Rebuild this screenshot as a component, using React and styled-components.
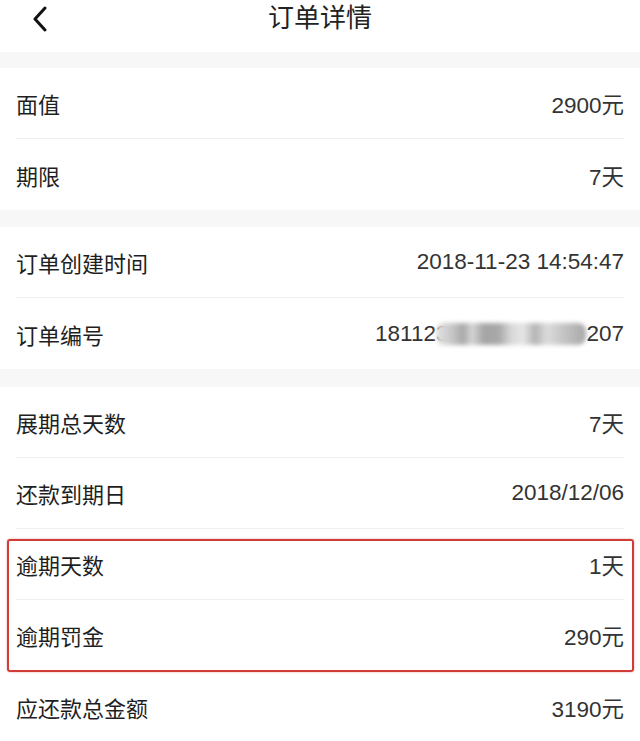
import React from 'react';
import styled, { createGlobalStyle } from 'styled-components';

const GlobalStyle = createGlobalStyle`
  html, body {
    margin: 0;
    padding: 0;
    background: #fff;
  }
  body {
    font-family: "Liberation Sans", "Noto Sans CJK SC", sans-serif;
    color: #2b2b2b;
  }
`;

const Page = styled.div`
  width: 640px;
  display: flex;
  flex-direction: column;
  background: #f7f7f7;
`;

const Header = styled.div`
  height: 52px;
  background: #fff;
  display: grid;
  grid-template-columns: 80px 1fr 80px;
  align-items: start;
`;

const BackButton = styled.div`
  padding: 6px 0 0 32px;
  display: flex;
`;

const Title = styled.h1`
  margin: 0;
  padding-top: 2px;
  text-align: center;
  font-size: 26px;
  line-height: 32px;
  font-weight: 400;
  color: #222;
`;

const Section = styled.div`
  background: #fff;
  margin-top: ${({ $gap }) => $gap}px;
  display: flex;
  flex-direction: column;
`;

const Row = styled.div`
  height: 71px;
  margin: 0 16px;
  display: flex;
  align-items: center;
  justify-content: space-between;
  border-bottom: ${({ $last }) => ($last ? 'none' : '1px solid #efefef')};
  box-sizing: border-box;
  font-size: 22px;
`;

const Label = styled.span`
  color: #1f1f1f;
`;

const Value = styled.span`
  color: #333;
  font-size: 22.5px;
  display: flex;
  align-items: center;
  white-space: nowrap;
`;

const Blurred = styled.span`
  display: inline-block;
  width: 150px;
  height: 22px;
  margin: 0 0 0 -12px;
  background: linear-gradient(
    90deg,
    #e2e2e2 0%,
    #c9c9c9 10%,
    #a9a9a9 18%,
    #d6d6d6 24%,
    #a4a4a4 32%,
    #a9a9a9 42%,
    #d8d8d8 50%,
    #e6e6e6 58%,
    #b4b4b4 66%,
    #dcdcdc 74%,
    #c6c6c6 84%,
    #a8a8a8 100%
  );
  filter: blur(2px);
  border-radius: 8px;
`;

const Highlight = styled.div`
  position: relative;
`;

const RedFrame = styled.div`
  position: absolute;
  left: 7px;
  right: 6px;
  top: 10px;
  bottom: -1px;
  border: 2px solid #d03c37;
  border-radius: 3px;
  box-shadow: 0 0 2px rgba(210, 58, 53, 0.5);
  pointer-events: none;
`;

function Chevron() {
  return (
    <svg width="16" height="26" viewBox="0 0 16 26">
      <polyline
        points="13,2 3,13 13,24"
        fill="none"
        stroke="#111"
        strokeWidth="3"
        strokeLinecap="round"
        strokeLinejoin="round"
      />
    </svg>
  );
}

export default function App() {
  return (
    <>
      <GlobalStyle />
      <Page>
        <Header>
          <BackButton>
            <Chevron />
          </BackButton>
          <Title>订单详情</Title>
          <div />
        </Header>

        <Section $gap={16}>
          <Row>
            <Label>面值</Label>
            <Value>2900元</Value>
          </Row>
          <Row $last>
            <Label>期限</Label>
            <Value>7天</Value>
          </Row>
        </Section>

        <Section $gap={17}>
          <Row>
            <Label>订单创建时间</Label>
            <Value>2018-11-23 14:54:47</Value>
          </Row>
          <Row $last>
            <Label>订单编号</Label>
            <Value>
              181123
              <Blurred />
              207
            </Value>
          </Row>
        </Section>

        <Section $gap={18}>
          <Row>
            <Label>展期总天数</Label>
            <Value>7天</Value>
          </Row>
          <Row>
            <Label>还款到期日</Label>
            <Value>2018/12/06</Value>
          </Row>
          <Highlight>
            <Row>
              <Label>逾期天数</Label>
              <Value>1天</Value>
            </Row>
            <Row>
              <Label>逾期罚金</Label>
              <Value>290元</Value>
            </Row>
            <RedFrame />
          </Highlight>
          <Row $last>
            <Label>应还款总金额</Label>
            <Value>3190元</Value>
          </Row>
        </Section>
      </Page>
    </>
  );
}
